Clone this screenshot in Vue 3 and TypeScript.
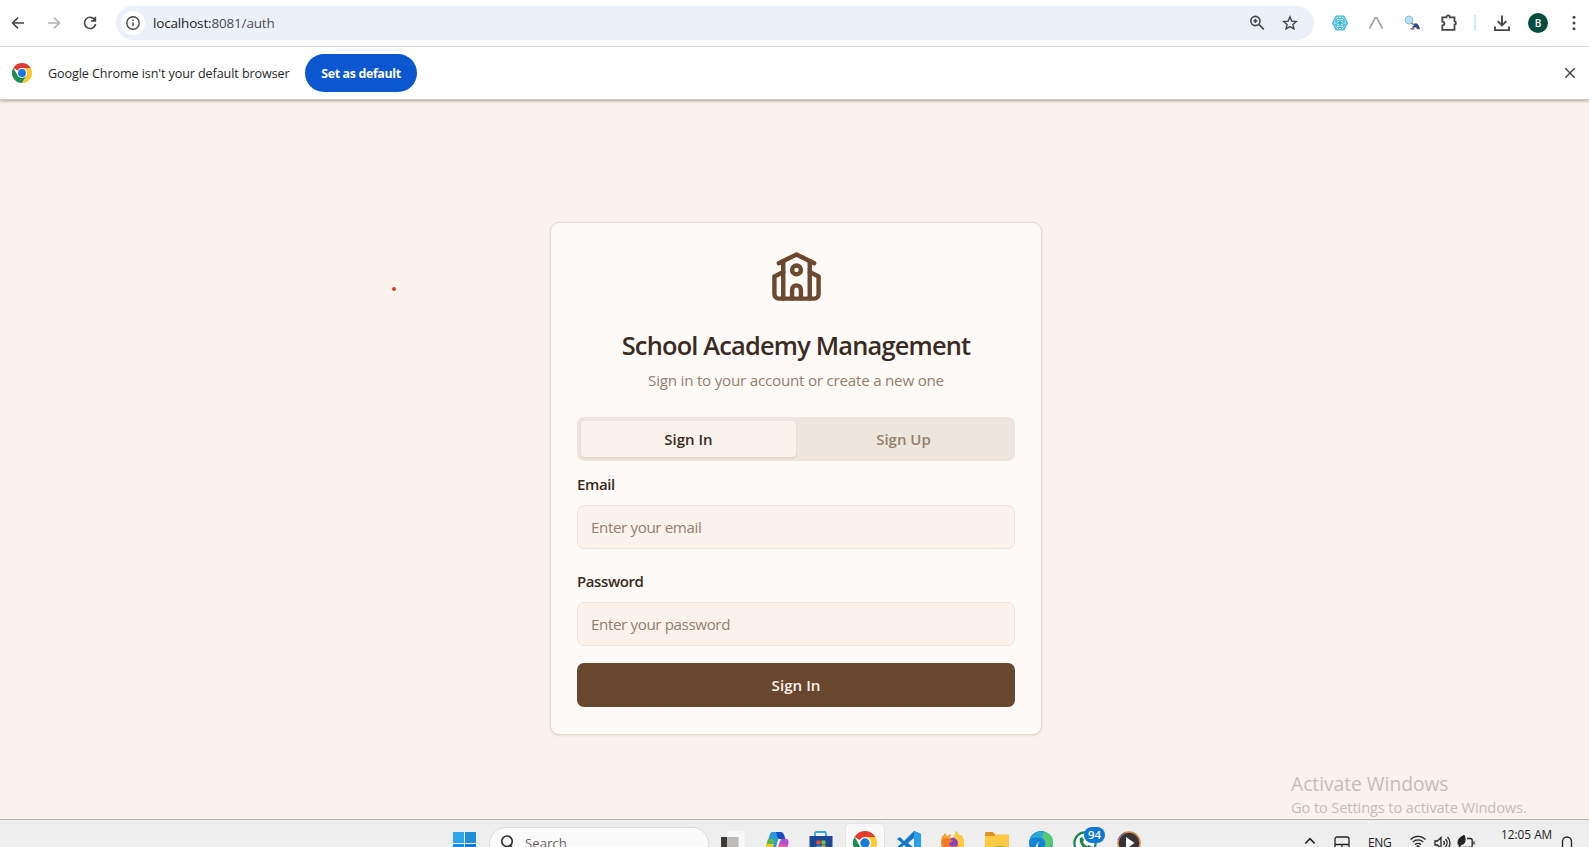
<script setup lang="ts">
import { ref } from 'vue'

type Tab = 'in' | 'up'

const tab = ref<Tab>('in')
const email = ref('')
const password = ref('')
const tabs: { id: Tab; label: string }[] = [
  { id: 'in', label: 'Sign In' },
  { id: 'up', label: 'Sign Up' },
]
</script>

<template>
  <div class="screen">
    <header class="toolbar">
      <svg class="ic nav" viewBox="0 0 16 16"><path d="M14 8H2.8M8 2.6 2.6 8 8 13.4" /></svg>
      <svg class="ic nav off" viewBox="0 0 16 16"><path d="M2 8h11.2M8 2.6 13.4 8 8 13.4" /></svg>
      <svg class="ic nav" viewBox="0 0 16 16"><path d="M13 5.2A5.6 5.6 0 1 0 13.6 9M13.4 1.8v4.1H9.2" /></svg>
      <div class="omnibox">
        <span class="info">
          <svg class="ic" viewBox="0 0 16 16"><circle cx="8" cy="8" r="6.2" /><path d="M8 7.2v4M8 4.6v1.5" /></svg>
        </span>
        <span class="url">localhost:<i>8081/auth</i></span>
        <svg class="ic zoom" viewBox="0 0 16 16"><circle cx="6.4" cy="6" r="4.6" /><path d="m9.8 9.4 5 5M6.4 4v4M4.4 6h4" /></svg>
        <svg class="ic star" viewBox="0 0 16 16"><path d="m8 1.9 1.8 4.2 4.5.4-3.4 3 1 4.4L8 11.6l-3.9 2.3 1-4.4-3.4-3 4.5-.4z" /></svg>
      </div>
      <svg class="ext" viewBox="0 0 16 16" fill="none" stroke="#3db8d8">
        <path d="M4.2 1.2h7.6L15.4 8l-3.6 6.8H4.2L.6 8z" stroke-width="1.2" />
        <path d="M5.2 3.4h5.6L13.2 8l-2.4 4.6H5.2L2.8 8z" stroke-width="1" />
        <ellipse cx="8" cy="8" rx="7" ry="2.7" stroke-width=".8" />
        <ellipse cx="8" cy="8" rx="7" ry="2.7" stroke-width=".8" transform="rotate(60 8 8)" />
        <ellipse cx="8" cy="8" rx="7" ry="2.7" stroke-width=".8" transform="rotate(120 8 8)" />
        <circle cx="8" cy="8" r="1.5" fill="#3db8d8" />
      </svg>
      <svg class="ext" viewBox="0 0 16 16"><path d="M1.5 13.5 7.2 2.8h1.6l5.7 10.7" fill="none" stroke="#a3a3a0" stroke-width="1.7" /></svg>
      <svg class="ext" viewBox="0 0 16 16">
        <circle cx="5" cy="5" r="4" fill="#b3dffb" stroke="#a3bccb" />
        <path d="m7.5 8 2.500 2" stroke="#777" stroke-width="1.6" />
        <path d="m10.500 8.200 2.500.3 2 2.500.8 2.500-2-.3-2.600-.9-2.500.7-.6-1.300 1.800-1z" fill="#2a4590" />
        <path d="M6.500 13h3.800v1.600H6.500z" fill="#9b7265" /><path d="M12 12.600h3.600v1.600H13z" fill="#6c4a5d" />
      </svg>
      <svg class="ic puzzle" viewBox="0 0 18 18"><path d="M2.300 3.300h4.200c0-2.500 3.300-2.500 3.300 0h4.700v4c1.900 0 1.900 3.300 0 3.300v5.200H2.300v-4.300c2.800-.2 2.800-3.700 0-3.900z" /></svg>
      <span class="divider"></span>
      <svg class="ic download" viewBox="0 0 18 18"><path d="M9 1.500v9.600M4.700 7.200 9 11.500l4.300-4.300M2 12.600v3.500h14v-3.500" /></svg>
      <span class="avatar">B</span>
      <svg class="dots" viewBox="0 0 4 16"><circle cx="2" cy="2.200" r="1.500" /><circle cx="2" cy="8" r="1.500" /><circle cx="2" cy="13.800" r="1.500" /></svg>
    </header>

    <div class="infobar">
      <svg class="chrome" viewBox="0 0 24 24">
        <path d="M12 12 1.6 6A12 12 0 0 1 22.4 6z" fill="#e33b2e" />
        <path d="M12 12V6h10.4A12 12 0 0 1 12 24l5.2-9z" fill="#fcc934" />
        <path d="M12 12 6.8 15 1.6 6A12 12 0 0 0 12 24l5.2-9z" fill="#1e8e4e" />
        <circle cx="12" cy="12" r="6" fill="#fff" /><circle cx="12" cy="12" r="4.7" fill="#1a73e8" />
      </svg>
      <span class="notice">Google Chrome isn't your default browser</span>
      <button class="default" type="button">Set as default</button>
      <svg class="ic close" viewBox="0 0 12 12"><path d="m1.3 1.3 9.4 9.4m0-9.4-9.4 9.4" /></svg>
    </div>

    <main class="page">
      <span class="speck"></span>
      <section class="card">
        <svg class="school" viewBox="0 0 24 24">
          <path d="M14 22v-4a2 2 0 1 0-4 0v4" />
          <path d="m18 10 4 2v8a2 2 0 0 1-2 2H4a2 2 0 0 1-2-2v-8l4-2" />
          <path d="M18 5v17" /><path d="m4 6 8-4 8 4" /><path d="M6 5v17" />
          <circle cx="12" cy="9" r="2" />
        </svg>
        <h1>School Academy Management</h1>
        <p class="sub">Sign in to your account or create a new one</p>
        <div class="tabs" role="tablist">
          <button v-for="t in tabs" :key="t.id" type="button" :class="['tab', { active: tab === t.id }]" @click="tab = t.id">{{ t.label }}</button>
        </div>
        <form @submit.prevent>
          <label for="email">Email</label>
          <input id="email" v-model="email" type="email" placeholder="Enter your email" />
          <label for="password">Password</label>
          <input id="password" v-model="password" type="password" placeholder="Enter your password" />
          <button class="submit" type="submit">Sign In</button>
        </form>
      </section>
      <div class="watermark">
        <div class="wm-title">Activate Windows</div>
        <div class="wm-sub">Go to Settings to activate Windows.</div>
      </div>
    </main>

    <footer class="taskbar">
      <svg class="start" viewBox="0 0 23 23">
        <path d="M0 0h11v11H0z" fill="#2da5ea" /><path d="M12 0h11v11H12z" fill="#1f8fdc" />
        <path d="M0 12h11v11H0z" fill="#168be0" /><path d="M12 12h11v11H12z" fill="#0b78d0" />
      </svg>
      <div class="search">
        <svg viewBox="0 0 16 18"><circle cx="7.5" cy="6.6" r="5.6" /><path d="m11 11 4 5" /></svg>
        <span>Search</span>
      </div>
      <div class="apps">
        <svg class="app" viewBox="0 0 24 24"><path d="M0 6h17v17H0z" fill="#3b3838" /><path d="M6 0h17.500v17H6z" fill="#f8f8f8" /><path d="M6 6h11.500v11H6z" fill="#bcbab6" /></svg>
        <svg class="app" viewBox="0 0 24 24">
          <path d="M5 3C5.600 1.500 6.500 1 8 1h8l-3 8-4 14H5c-4 0-5-3-4-7z" fill="#2b9be0" />
          <path d="M3 8h7l-2 6H1.200z" fill="#5cb947" /><path d="M1.200 13H9l-3 10H4c-3 0-4-3-3-7z" fill="#efc92b" />
          <path d="M11 1h4.500c2 0 3 1 3.600 3l1.400 4h-7l-1.500-3z" fill="#1450c4" />
          <path d="M16 8h5c2.500 0 3 2 2.300 5L21 19c-1 3-2 4-4 4h-6l3-10z" fill="#b550cf" /><path d="m14.500 13 8 2-2 6-8-1z" fill="#e8649a" />
        </svg>
        <svg class="app" viewBox="0 0 24 24">
          <path d="M6 6V2.500C6 1.600 6.600 1 7.500 1h8c.9 0 1.500.6 1.500 1.500V6" fill="none" stroke="#2ea4e8" stroke-width="1.800" />
          <path d="M.5 5h23v16a2 2 0 0 1-2 2h-19a2 2 0 0 1-2-2z" fill="#1e4793" />
          <path d="M7.500 9.500h4v4h-4z" fill="#ef5032" /><path d="M12.500 9.500h4v4h-4z" fill="#80c342" /><path d="M7.500 14.500h4v4h-4z" fill="#26a6e8" /><path d="M12.500 14.500h4v4h-4z" fill="#fbbf16" />
        </svg>
        <span class="tile">
          <svg class="app" viewBox="0 0 24 24">
            <path d="M12 12 1.600 6A12 12 0 0 1 22.400 6z" fill="#e33b2e" />
            <path d="M12 12V6h10.400A12 12 0 0 1 12 24l5.200-9z" fill="#fcc934" />
            <path d="M12 12 6.800 15 1.600 6A12 12 0 0 0 12 24l5.200-9z" fill="#1e8e4e" />
            <circle cx="12" cy="12" r="6" fill="#fff" /><circle cx="12" cy="12" r="4.700" fill="#1a7ad8" />
          </svg>
        </span>
        <svg class="app" viewBox="0 0 24 24"><path d="m17 0 7 3v18l-7 3L7 14l-4 4-3-2 5-4-5-4 3-2 4 4z" fill="#1277c8" /><path d="m17 0 7 3v18l-7 3z" fill="#2ba0ea" /><path d="m17 7-6 5 6 5z" fill="#eee" /></svg>
        <svg class="app" viewBox="0 0 24 24">
          <path d="M2 5 4 2l2 3 4-2-1 4 4-1 2-6 4 5 1-1c2 2 3 5 3 8a11.500 11.500 0 0 1-23 0c0-3 0-5 2-8z" fill="#f5a02c" />
          <path d="m13 6 2-6 4 5 1-1c2 2 3 5 3 8a11 11 0 0 1-3 8z" fill="#fcc93c" />
          <circle cx="12" cy="12" r="5" fill="#8540c5" /><path d="M2 8c4-2 6 1 10 1-1 3-4 2-4 4 1 3 5 3 7 1-1 8-14 6-14-3z" fill="#f2772b" />
        </svg>
        <svg class="app" viewBox="0 0 24 24"><path d="M0 2.500C0 1.700.7 1 1.500 1H8l2.500 3H24v18H0z" fill="#dd9326" /><path d="M0 5h9l2-1.500h13V22H0z" fill="#fbc943" /><path d="M11 15h8v5h-8z" fill="#a6a44f" /></svg>
        <svg class="app" viewBox="0 0 24 24">
          <circle cx="12" cy="12" r="12" fill="#1583d3" />
          <path d="M1 8C5-2 21-3 24 11c0 5-5 7-9 5 4-5-2-13-14-8z" fill="#2ba8d5" />
          <path d="M15 1c6 1 9 6 9 11 0 4-5 6-9 4 3-4 1-8-2-10z" fill="#58c773" />
          <path d="M11 10c-4 4-2 10 4 12-8 2-12-7-4-12z" fill="#d8e6f2" />
        </svg>
        <span class="wa">
          <svg class="app" viewBox="0 0 24 24"><circle cx="12" cy="12" r="10.600" fill="#fff" stroke="#1c8551" stroke-width="2.200" /><path d="m7 7 2-1 2 3-1 2c1 2 2 3 4 4l2-1 3 2-1 2c-5 3-13-5-11-11z" fill="#1c8551" /></svg>
          <b>94</b>
        </span>
        <svg class="app" viewBox="0 0 24 24"><circle cx="12" cy="12" r="11" fill="#383436" stroke="#d38b4c" stroke-width="1.600" /><path d="M1.200 9A11 11 0 0 1 8 1.800" stroke="#8375a4" stroke-width="1.400" fill="none" /><path d="m9 6 8.500 6L9 18z" fill="#fff" /></svg>
      </div>
      <div class="tray">
        <svg class="t caret" viewBox="0 0 12 8"><path d="m1.300 6.500 4.700-4.800 4.700 4.800" /></svg>
        <svg class="t pad" viewBox="0 0 16 16"><rect x="1" y="1" width="14" height="13" rx="2" /><path d="M1 8.500h14M8 8.500V14" /></svg>
        <span class="eng">ENG</span>
        <svg class="t wifi" viewBox="0 0 18 16"><path d="M1.500 5.500a10.500 10.500 0 0 1 15 0M3.800 8.100a7.300 7.300 0 0 1 10.400 0M6 10.700a4.300 4.300 0 0 1 6 0" /><circle cx="9" cy="13" r="1" /></svg>
        <svg class="t vol" viewBox="0 0 17 14"><path d="M1 5v4h2.500L7 12.500v-11L3.500 5zM9.500 5a3 3 0 0 1 0 4M11.500 3a6 6 0 0 1 0 8M13.500 1a8.500 8.500 0 0 1 0 12" /></svg>
        <svg class="t bat" viewBox="0 0 18 16"><path d="M1.500 9.500C0 4 3.500 3 7 .5c2 4 1 8.500-3 9l-2 3" fill="#222" /><path d="M10 3.500h3.200a2 2 0 0 1 2 2v5a2 2 0 0 1-2 2H5M17 6.500v3" /></svg>
        <span class="clock">12:05 AM</span>
        <svg class="t bell" viewBox="0 0 14 16"><path d="M2.500 12V6.500a4.500 4.500 0 0 1 9 0V12l1.500 1.500H1z" /></svg>
      </div>
    </footer>
  </div>
</template>

<style>
body {
  margin: 0;
  overflow: hidden;
}
</style>

<style scoped>
.screen {
  width: 1589px;
  height: 847px;
  display: flex;
  flex-direction: column;
  overflow: hidden;
  background: #faf2eb;
  font-family: "Open Sans", "Noto Sans", sans-serif;
  color: #3a2a24;
}
.screen *, .screen *::before { box-sizing: border-box; }
svg { display: block; flex: none; }
button, input { font-family: inherit; border: 0; padding: 0; }
.ic { width: 16px; height: 16px; fill: none; stroke: #45464a; stroke-width: 1.6; }

.toolbar {
  height: 47px;
  flex: none;
  display: flex;
  align-items: center;
  padding: 0 0 1px 10px;
  background: #fff;
  border-bottom: 1px solid #dcdddd;
}
.nav { margin-right: 20px; }
.nav.off { stroke: #b3b3b3; }
.omnibox {
  width: 1198px;
  height: 34px;
  margin: 0 18px 0 -2px;
  padding: 0 16px 0 5px;
  border-radius: 17px;
  background: #ecf0fa;
  display: flex;
  align-items: center;
}
.info { width: 24px; height: 24px; border-radius: 50%; background: #fff; display: grid; place-items: center; }
.info .ic { stroke-width: 1.4; }
.url { margin: 1px 0 0 8px; font-size: 13.5px; letter-spacing: -0.17px; color: #232427; }
.url i { font-style: normal; color: #4b4d52; }
.zoom { margin-left: auto; stroke-width: 1.6; }
.star { margin-left: 17px; stroke-width: 1.4; }
.ext { width: 16px; height: 16px; margin-right: 20px; }
.puzzle { width: 18px; height: 18px; margin-right: 16px; stroke-width: 1.8; }
.divider { width: 2px; height: 16px; background: #c9eff8; margin-right: 17px; }
.download { width: 18px; height: 18px; stroke-width: 1.9; }
.avatar {
  width: 20px;
  height: 20px;
  margin-left: 17px;
  border-radius: 50%;
  background: #054c3f;
  color: #fff;
  font-size: 10px;
  font-weight: 600;
  line-height: 20px;
  text-align: center;
}
.dots { width: 4px; height: 16px; margin-left: 24px; fill: #45464a; }

.infobar {
  position: relative;
  z-index: 1;
  height: 52px;
  flex: none;
  display: flex;
  align-items: center;
  padding: 0 13px 0 12px;
  background: #fff;
  box-shadow: 0 1px 0 #cbcac5, 0 2px 3px #a9a6a0;
}
.chrome { width: 20px; height: 20px; }
.notice { width: 257px; margin-left: 16px; font-size: 12.6px; letter-spacing: -0.1px; color: #27282b; white-space: nowrap; }
.default {
  width: 112px;
  height: 38px;
  border-radius: 19px;
  background: #0b57d0;
  color: #fff;
  font-size: 12.4px;
  font-weight: 700;
  letter-spacing: -0.35px;
}
.close { width: 12px; height: 12px; margin-left: auto; stroke-width: 1.4; }

.page { position: relative; flex: 1; display: flex; flex-direction: column; }
.speck { position: absolute; left: 391.5px; top: 188px; width: 4px; height: 4px; border-radius: 50%; background: #e8362a; }
.card {
  width: 492px;
  height: 513px;
  margin: 123px 0 0 550px;
  padding: 27px 26px 0;
  border: 1px solid #e2dad3;
  border-radius: 9px;
  background: #fefaf7;
  box-shadow: 0 1px 2px #3a2a2418;
}
.school { width: 53px; height: 53px; margin: 0 auto; fill: none; stroke: #6b4830; stroke-width: 2; stroke-linecap: round; stroke-linejoin: round; }
h1 { margin: 25px 0 0; font-size: 25.4px; line-height: 35px; font-weight: 600; letter-spacing: -0.82px; text-align: center; white-space: nowrap; }
.sub { margin: 6px 0 0; font-size: 15.2px; line-height: 22px; letter-spacing: -0.24px; text-align: center; color: #95806f; white-space: nowrap; }
.tabs { height: 44px; margin-top: 26px; padding: 4px; display: grid; grid-template-columns: 1fr 1fr; border-radius: 7px; background: #eee5dc; }
.tab { background: none; border-radius: 4px; font-size: 15px; font-weight: 600; color: #95806f; }
.tab.active { background: #faf2eb; color: #3a2a24; box-shadow: 0 1px 2px #3a2a2420; }
form { display: flex; flex-direction: column; padding-top: 12px; }
label { font-size: 15px; line-height: 22px; font-weight: 600; letter-spacing: -0.4px; margin-bottom: 10px; }
input {
  height: 44px;
  margin-bottom: 21px;
  padding: 0 13px;
  border: 1px solid #eee5dc;
  border-radius: 7px;
  background: #faf2eb;
  font-size: 15.2px;
  letter-spacing: -0.4px;
}
input::placeholder { color: #95806f; opacity: 1; }
.submit { height: 44px; margin-top: -4px; border-radius: 7px; background: #69472f; color: #faf2eb; font-size: 15.2px; font-weight: 600; }

.watermark { position: absolute; left: 1291px; top: 672px; color: #c2bebb; white-space: nowrap; }
.wm-title { font-size: 19.2px; line-height: 26px; }
.wm-sub { font-size: 14.6px; line-height: 20px; letter-spacing: -0.1px; }

.taskbar { height: 28px; flex: none; display: flex; align-items: flex-start; overflow: hidden; background: #eee; border-top: 1px solid #b5b5b5; padding-left: 453px; }
.start { width: 23px; height: 23px; margin-top: 12px; }
.search { width: 220px; height: 34px; flex: none; margin: 7px 0 0 13px; border: 1px solid #dcdcdc; border-radius: 17px; background: #fbfbfb; display: flex; padding: 7px 0 0 10px; }
.search svg { width: 15px; height: 17px; fill: none; stroke: #333; stroke-width: 1.8; }
.search span { margin-left: 10px; font-size: 13.2px; line-height: 16px; color: #66615f; }
.apps { display: flex; gap: 20px; margin: 11px 0 0 12px; flex: none; }
.app { width: 24px; height: 24px; }
.tile { width: 38px; height: 38px; margin: -7px; padding: 7px 0 0 7px; border-radius: 4px; background: #f9f9f9; box-shadow: 0 0 0 1px #e4e4e4; }
.wa { position: relative; }
.wa b { position: absolute; left: 11px; top: -4px; width: 21px; height: 16px; border-radius: 8px; background: #0e78d4; color: #fff; font-size: 11.5px; line-height: 16px; font-weight: 600; text-align: center; }
.tray { display: flex; margin-left: 163px; flex: none; color: #222; }
.t { fill: none; stroke: #222; stroke-width: 1.3; }
.caret { width: 12px; height: 8px; margin-top: 17px; stroke-width: 1.6; }
.pad { width: 16px; height: 16px; margin: 16px 0 0 18px; }
.eng { width: 25px; margin: 15px 0 0 18px; font-size: 12px; line-height: 16px; letter-spacing: -0.3px; }
.wifi { width: 18px; height: 16px; margin: 14px 0 0 16px; }
.vol { width: 17px; height: 14px; margin: 16px 0 0 7px; }
.bat { width: 18px; height: 16px; margin: 15px 0 0 6px; }
.clock { width: 52px; margin: 6px 0 0 26px; font-size: 11.8px; line-height: 17px; white-space: nowrap; }
.bell { width: 14px; height: 16px; margin: 15px 0 0 7px; }
</style>
